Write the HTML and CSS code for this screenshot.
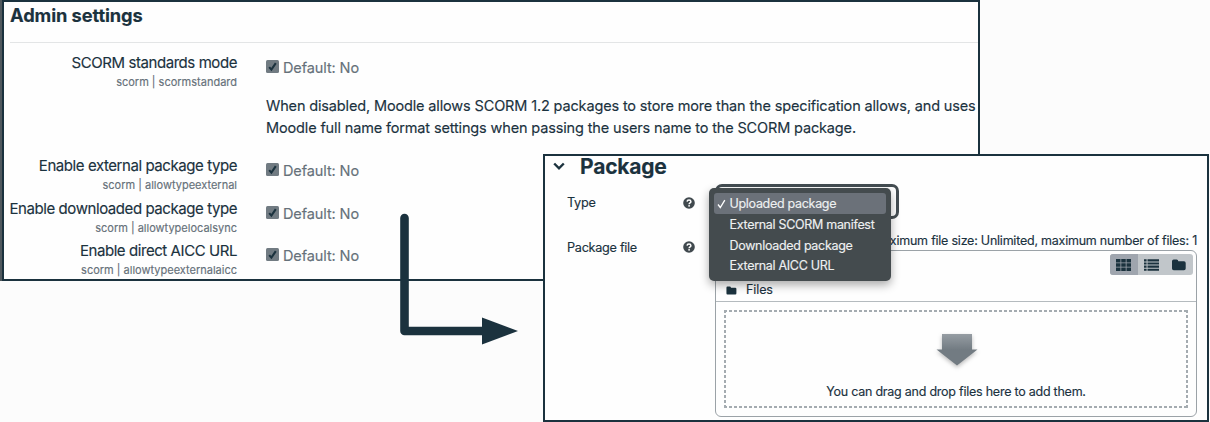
FILE: index.html
```
<!DOCTYPE html>
<html lang="en">
<head>
<meta charset="utf-8">
<title>Admin settings</title>
<link rel="stylesheet" href="styles.css">
</head>
<body>
<svg class="defs" width="0" height="0" aria-hidden="true">
  <symbol id="check" viewBox="0 0 13 13"><rect width="13" height="13" rx="1.5" fill="#717b82"/><path d="M3.2 7.1 5.4 9.6 9.8 3.2" fill="none" stroke="#1b323e" stroke-width="2.1"/></symbol>
  <symbol id="help" viewBox="0 0 12 12"><circle cx="6" cy="6" r="5.8" fill="#40494e"/><path d="M4.1 4.6C4.2 2.6 7.9 2.6 7.9 4.7 7.9 6 6.1 5.9 6.1 7.3" fill="none" stroke="#fff" stroke-width="1.5"/><rect x="5.3" y="8.1" width="1.6" height="1.5" fill="#fff"/></symbol>
  <symbol id="folder" viewBox="0 0 14 12"><path d="M0 2.2Q0 .5 1.7.5H4.6Q6.2.5 6.3 2.2H12Q13.7 2.2 13.7 3.9V9.5Q13.7 11.3 12 11.3H1.7Q0 11.3 0 9.5Z" fill="#1b323e"/></symbol>
</svg>
<main class="stage">
  <section class="panel admin">
    <h1 class="admin-title">Admin settings</h1>
    <div class="settings">
      <div class="label"><div class="name">SCORM standards mode</div><div class="key">scorm | scormstandard</div></div>
      <div class="field"><div class="value"><svg class="check"><use href="#check"/></svg>Default: No</div>
        <p class="help-text">When disabled, Moodle allows SCORM 1.2 packages to store more than the specification allows, and uses<br>Moodle full name format settings when passing the users name to the SCORM package.</p></div>
      <div class="label"><div class="name">Enable external package type</div><div class="key">scorm | allowtypeexternal</div></div>
      <div class="field"><div class="value"><svg class="check"><use href="#check"/></svg>Default: No</div></div>
      <div class="label"><div class="name">Enable downloaded package type</div><div class="key">scorm | allowtypelocalsync</div></div>
      <div class="field"><div class="value"><svg class="check"><use href="#check"/></svg>Default: No</div></div>
      <div class="label"><div class="name">Enable direct AICC URL</div><div class="key">scorm | allowtypeexternalaicc</div></div>
      <div class="field"><div class="value"><svg class="check"><use href="#check"/></svg>Default: No</div></div>
    </div>
  </section>

  <svg class="connector" width="122" height="136" viewBox="0 0 122 136"><path d="M8.5 8V121H90" fill="none" stroke="#1b323e" stroke-width="8.6" stroke-linecap="round" stroke-linejoin="round"/><path d="M86 107.5 122 121 86 134.5Z" fill="#1b323e"/></svg>

  <section class="panel package">
    <h2 class="package-title"><svg width="12" height="9" viewBox="0 0 12 9"><path d="M1.2 1.5 6 6.3 10.8 1.5" fill="none" stroke="#1b323e" stroke-width="2.4"/></svg>Package</h2>
    <div class="form">
      <div class="form-label">Type<svg class="help"><use href="#help"/></svg></div>
      <div class="select-slot">
        <div class="select"></div>
        <ul class="menu">
          <li class="selected"><svg class="tick" width="9" height="10" viewBox="0 0 9 10"><path d="M1 5.5 3.3 8.5 7.8 1.2" fill="none" stroke="#fff" stroke-width="1.3"/></svg>Uploaded package</li>
          <li>External SCORM manifest</li>
          <li>Downloaded package</li>
          <li>External AICC URL</li>
        </ul>
      </div>
      <div class="form-label file-label">Package file<svg class="help"><use href="#help"/></svg></div>
      <div class="files">
        <div class="limits">Maximum file size: Unlimited, maximum number of files: 1</div>
        <div class="manager">
          <div class="toolbar">
            <div class="views">
              <span class="view active"><svg width="15" height="12" viewBox="0 0 15 12"><path d="M0 1.8H15M0 6H15M0 10.2H15" stroke="#1b323e" stroke-width="3.4" stroke-dasharray="4.5 .75"/></svg></span>
              <span class="view"><svg width="15" height="12" viewBox="0 0 15 12"><path d="M0 1.4H2.6M3.5 1.4H15M0 4.5H2.6M3.5 4.5H15M0 7.6H2.6M3.5 7.6H15M0 10.7H2.6M3.5 10.7H15" stroke="#1b323e" stroke-width="2.1"/></svg></span>
              <span class="view"><svg width="14" height="12"><use href="#folder"/></svg></span>
            </div>
            <div class="path"><svg width="11" height="9" viewBox="0 0 14 12"><use href="#folder" width="14" height="12"/></svg>Files</div>
          </div>
          <div class="dropzone">
            <svg width="46" height="40" viewBox="0 0 46 40"><defs><linearGradient id="fade" x2="0" y2="1"><stop stop-color="#969da3"/><stop offset=".5" stop-color="#727b82"/></linearGradient></defs><path d="M8 2H38V17.5H43.5L23 33.5 2.5 17.5H8Z" fill="url(#fade)"/></svg>
            <div class="drop-text">You can drag and drop files here to add them.</div>
          </div>
        </div>
      </div>
    </div>
  </section>
</main>
</body>
</html>
```
FILE: styles.css
```
* { box-sizing: border-box; }
body { margin: 0; background: #fcfcfc; color: #1b323e; font-family: Inter, "Liberation Sans", sans-serif; }
h1, h2, p, ul { margin: 0; padding: 0; }
svg { display: block; flex: none; }
.defs { position: absolute; }
.stage { position: relative; width: 1210px; height: 422px; overflow: hidden; -webkit-text-stroke: .15px; }
.panel { position: absolute; background: #fefefe; border: 2px solid #1b323e; }
.admin { left: 2px; top: 0; width: 978px; height: 281px; padding: 0 0 0 6px; box-shadow: -2px 0 #50595e; }
.admin-title { height: 41px; border-bottom: 1px solid #e3e5e6; font-size: 18.3px; line-height: 26px; font-weight: 700; letter-spacing: -.1px; white-space: nowrap; }
.settings { display: grid; grid-template-columns: 227px 1fr; column-gap: 29px; grid-template-rows: 103px 43px 42px 43px; padding-top: 9px; }
.label { text-align: right; white-space: nowrap; display: flex; flex-direction: column; align-items: flex-end; }
.name { font-size: 15px; line-height: 22px; letter-spacing: -.43px; }
.key { font-size: 11px; line-height: 16px; color: #66717a; }
.value { display: flex; align-items: center; gap: 4px; height: 22px; margin-top: 4px; font-size: 14.5px; letter-spacing: -.1px; color: #66717a; white-space: nowrap; }
.check { width: 13px; height: 13px; margin-bottom: 2px; }
.help-text { margin-top: 17px; font-size: 14.5px; line-height: 22px; letter-spacing: -.145px; white-space: nowrap; }
.connector { position: absolute; left: 396px; top: 210px; }
.package { left: 543px; top: 154px; width: 666px; height: 268px; padding: 0 10px 0 8px; }
.package-title { display: flex; align-items: center; gap: 15px; height: 21px; margin-bottom: 2px; font-size: 21px; line-height: 20px; font-weight: 700; letter-spacing: -.2px; }
.form { display: grid; grid-template-columns: 142px 1fr; column-gap: 20px; grid-template-rows: 50px 1fr; padding-top: 5px; }
.form-label { display: flex; justify-content: space-between; align-items: center; height: 37px; padding-left: 14px; font-size: 12.7px; letter-spacing: -.3px; }
.file-label { height: 26px; }
.help { width: 12px; height: 12px; }
.select-slot { position: relative; }
.select { width: 184px; height: 35px; border: 3px solid #444d52; border-radius: 7px; background: #fff; }
.menu { position: absolute; z-index: 2; left: -6px; top: 4px; width: 182px; height: 93px; padding: 5px; list-style: none; background: #444b4e; border-radius: 5px; color: #eef0f1; font-size: 12.5px; letter-spacing: -.3px; box-shadow: 0 4px 10px #0005; }
.menu li { position: relative; height: 20.8px; padding-left: 15.5px; line-height: 22px; white-space: nowrap; }
.menu .selected { background: #6b7179; border-radius: 3px; }
.tick { position: absolute; left: 3px; top: 6px; }
.limits { height: 16px; font-size: 12.5px; line-height: 14px; letter-spacing: -.23px; text-align: right; white-space: nowrap; }
.manager { height: 167px; border: 1px solid #9ba2a7; border-radius: 6px; }
.toolbar { display: flex; flex-direction: column; align-items: flex-end; height: 51px; padding: 3px; border-bottom: 1px solid #b4babe; }
.views { display: flex; width: 83px; height: 25px; overflow: hidden; background: #c1c6ca; border-radius: 3px; }
.view { flex: 1; display: flex; align-items: center; justify-content: center; }
.view.active { background: #9fa5ae; }
.path { display: flex; align-items: center; align-self: flex-start; gap: 9px; padding: 7px 0 0 7px; font-size: 12.5px; line-height: 16px; letter-spacing: -.1px; }
.dropzone {
  --dash: #a4abb0 0 3px, #0000 3px 5px;
  display: flex; flex-direction: column; align-items: center; height: 98px; margin: 8px; padding-top: 22px;
  background:
    repeating-linear-gradient(90deg, var(--dash)) 0 0 / 100% 2px no-repeat,
    repeating-linear-gradient(90deg, var(--dash)) 0 100% / 100% 2px no-repeat,
    repeating-linear-gradient(var(--dash)) 0 0 / 2px 100% no-repeat,
    repeating-linear-gradient(var(--dash)) 100% 0 / 2px 100% no-repeat;
}
.dropzone svg { margin-left: 2px; filter: drop-shadow(0 2px 2px #0004); }
.drop-text { margin-top: 11px; font-size: 12.5px; line-height: 18px; letter-spacing: -.24px; white-space: nowrap; }
```
